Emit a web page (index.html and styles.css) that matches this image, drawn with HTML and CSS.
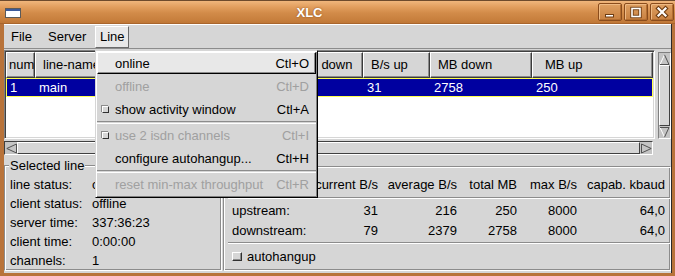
FILE: index.html
```html
<!DOCTYPE html>
<html lang="en">
<head>
<meta charset="utf-8">
<title>XLC</title>
<link rel="stylesheet" href="styles.css">
</head>
<body>
<div class="window">
  <header class="titlebar">
    <svg class="winicon" width="16" height="10" viewBox="0 0 16 10"><rect x="0.5" y="0.5" width="15" height="9" fill="#fff" stroke="#5a5a5a"/><rect x="1" y="1" width="14" height="2" fill="#3c5a9a"/></svg>
    <div class="title">XLC</div>
    <div class="tbuttons">
      <div class="tbtn"><svg width="22" height="16" viewBox="0 0 22 16"><rect x="6.5" y="10.5" width="8" height="2.5" fill="#fff" stroke="#6e3c12"/></svg></div>
      <div class="tbtn"><svg width="22" height="16" viewBox="0 0 22 16"><rect x="7" y="4.5" width="8" height="8" fill="none" stroke="#6e3c12" stroke-width="3.4"/><rect x="7" y="4.5" width="8" height="8" fill="none" stroke="#fff" stroke-width="1.6"/></svg></div>
      <div class="tbtn"><svg width="22" height="16" viewBox="0 0 22 16"><path d="M7.5 4.5 L14.5 11.5 M14.5 4.5 L7.5 11.5" stroke="#6e3c12" stroke-width="4.4" stroke-linecap="square"/><path d="M7.5 4.5 L14.5 11.5 M14.5 4.5 L7.5 11.5" stroke="#fff" stroke-width="2.2" stroke-linecap="square"/></svg></div>
    </div>
  </header>

  <div class="client">
    <nav class="menubar">
      <span class="mitem w-file">File</span>
      <span class="mitem w-server">Server</span>
      <span class="mitem w-line open">Line</span>
    </nav>

    <div class="tablezone">
      <div class="tframe">
        <div class="thead">
          <div class="th c1">number</div>
          <div class="th c2">line-name</div>
          <div class="th c3"></div>
          <div class="th c4"></div>
          <div class="th c5">B/s down</div>
          <div class="th c6">B/s up</div>
          <div class="th c7">MB down</div>
          <div class="th c8 pad-wide">MB up</div>
        </div>
        <div class="trow sel">
          <div class="td c1 first">1</div>
          <div class="td c2">main</div>
          <div class="td c3"></div>
          <div class="td c4"></div>
          <div class="td c5"></div>
          <div class="td c6">31</div>
          <div class="td c7">2758</div>
          <div class="td c8">250</div>
        </div>
      </div>

      <div class="vscroll">
        <div class="sbtn v"><svg width="11" height="11" viewBox="0 0 11 11"><path d="M1 10.5 L5.5 0.8" stroke="#fff" fill="none"/><path d="M5.5 0.8 L10 10.5 L1 10.5" stroke="#505050" fill="none"/></svg></div>
        <div class="vthumb"></div>
        <div class="sbtn v"><svg width="11" height="11" viewBox="0 0 11 11"><path d="M1 0.5 L5.5 10.2" stroke="#fff" fill="none"/><path d="M5.5 10.2 L10 0.5 L1 0.5" stroke="#505050" fill="none"/></svg></div>
      </div>

      <div class="hscroll">
        <div class="sbtn h"><svg width="11" height="11" viewBox="0 0 11 11"><path d="M10.5 1 L0.8 5.5" stroke="#505050" fill="none"/><path d="M0.8 5.5 L10.5 10 L10.5 1" stroke="#505050" fill="none"/></svg></div>
        <div class="hthumb"></div>
        <div class="sbtn h"><svg width="11" height="11" viewBox="0 0 11 11"><path d="M0.5 1 L10.2 5.5" stroke="#505050" fill="none"/><path d="M10.2 5.5 L0.5 10 L0.5 1" stroke="#505050" fill="none"/></svg></div>
      </div>
    </div>

    <div class="bottom">
      <fieldset class="group">
        <legend>Selected line</legend>
        <div class="ginfo">
          <span>line status:</span><span>connected</span>
          <span>client status:</span><span>offline</span>
          <span>server time:</span><span>337:36:23</span>
          <span>client time:</span><span>0:00:00</span>
          <span>channels:</span><span>1</span>
        </div>
      </fieldset>

      <section class="stats">
        <div class="sgrid shead">
          <span></span>
          <span class="r">current B/s</span>
          <span class="r">average B/s</span>
          <span class="r">total MB</span>
          <span class="r">max B/s</span>
          <span class="r">capab. kbaud</span>
        </div>
        <div class="hsep"></div>
        <div class="sgrid srow">
          <span>upstream:</span>
          <span class="r">31</span>
          <span class="r">216</span>
          <span class="r">250</span>
          <span class="r">8000</span>
          <span class="r">64,0</span>
        </div>
        <div class="sgrid srow">
          <span>downstream:</span>
          <span class="r">79</span>
          <span class="r">2379</span>
          <span class="r">2758</span>
          <span class="r">8000</span>
          <span class="r">64,0</span>
        </div>
        <div class="hsep sep2"></div>
        <label class="autoh"><span class="cbox"></span>autohangup</label>
      </section>
    </div>
  </div>

  <div class="menu">
    <div class="mi hl"><span class="ind"></span><span class="lbl">online</span><span class="sc">Ctl+O</span></div>
    <div class="mi dis"><span class="ind"></span><span class="lbl">offline</span><span class="sc">Ctl+D</span></div>
    <div class="mi"><span class="ind on"></span><span class="lbl">show activity window</span><span class="sc">Ctl+A</span></div>
    <div class="msep"></div>
    <div class="mi dis"><span class="ind on"></span><span class="lbl">use 2 isdn channels</span><span class="sc">Ctl+I</span></div>
    <div class="mi"><span class="ind"></span><span class="lbl">configure autohangup...</span><span class="sc">Ctl+H</span></div>
    <div class="msep"></div>
    <div class="mi dis"><span class="ind"></span><span class="lbl">reset min-max throughput</span><span class="sc">Ctl+R</span></div>
  </div>
</div>
</body>
</html>
```

FILE: styles.css
```css
* { box-sizing: border-box; }
html, body { margin: 0; padding: 0; }
body {
  width: 675px; height: 276px; overflow: hidden;
  background: #b8733a;
  font-family: "Liberation Sans", Arial, sans-serif;
  font-size: 13px; color: #000;
}
.window { position: relative; width: 675px; height: 276px; display: flex; flex-direction: column; }

/* title bar */
.titlebar {
  flex: none; height: 24px; display: flex; align-items: flex-start; padding-left: 5px;
  background: linear-gradient(to bottom, #6e4a2c 0, #6e4a2c 1px, #f0b67c 1px, #e29e5e 7px, #d28b49 13px, #c77f3d 20px, #bf7736 23px, #a9652c 23px);
}
.winicon { margin-top: 8px; flex: none; }
.title {
  flex: 1; text-align: center; color: #fff; font-weight: bold; font-size: 13px; line-height: 25px;
  text-shadow: 0 0 2px #8a4e1c;
}
.tbuttons { display: flex; gap: 2px; margin: 3px 1px 0 0; }
.tbtn {
  width: 24px; height: 18px; border: 1px solid #8a4c1c; border-radius: 2px;
  background: linear-gradient(#dfa062, #c88040);
  box-shadow: inset 1px 1px 0 #efba84, inset -1px -1px 0 #b46e30;
}
.tbtn svg { display: block; }

/* client */
.client {
  flex: 1; min-height: 0; margin: 0 3px 3px 4px;
  background: #d6d6d6; border-right: 1px solid #2a2a2a;
  display: flex; flex-direction: column;
}

/* menubar */
.menubar {
  flex: none; height: 25px; display: flex; gap: 6px; padding: 1px 0 0 2px;
  border-top: 1px solid #fff; border-bottom: 1px solid #8c8c8c;
}
.mitem { height: 22px; line-height: 20px; padding-left: 4px; border: 1px solid transparent; white-space: nowrap; }
.w-file { width: 31px; }
.w-server { width: 46px; }
.w-line { width: 34px; }
.mitem.open { background: #e8e8e8; border-color: #fff #6a6a6a #6a6a6a #fff; }

/* table area */
.tablezone {
  flex: none; margin-top: 1px;
  display: grid; grid-template-columns: 651px 3px 13px; grid-template-rows: 89px 14px; row-gap: 2px;
}
.tframe {
  grid-column: 1; grid-row: 1; background: #fff; overflow: hidden; padding: 1px;
  border: 1px solid; border-color: #808080 #fff #fff #808080;
  box-shadow: inset 1px 1px 0 #404040, inset -1px -1px 0 #d6d6d6;
}
.thead { display: flex; height: 26px; }
.th {
  flex: none; height: 26px; line-height: 24px; padding-left: 7px; white-space: nowrap; overflow: hidden;
  background: #d6d6d6; border: 1px solid; border-color: #fff #3a3a3a #3a3a3a #fff;
  box-shadow: inset -1px -1px 0 #8c8c8c;
}
.th.c1 { padding-left: 2px; }
.th.c5 { padding-left: 5px; }
.th.pad-wide { padding-left: 12px; }
.c1 { width: 29px; }
.c2 { width: 120px; }
.c3 { width: 70px; }
.c4 { width: 68px; }
.c5 { width: 70px; }
.c6 { width: 67px; }
.c7 { width: 102px; }
.c8 { width: 121px; }
.trow { display: flex; height: 19px; }
.trow.sel { background: #0000a0; color: #fff; border: 1px solid #ffff50; }
.td { flex: none; line-height: 17px; padding-left: 4px; white-space: nowrap; }
.td.first { width: 28px; padding-left: 3px; }

/* scrollbars */
.vscroll {
  grid-column: 3; grid-row: 1; margin-top: 2px;
  display: flex; flex-direction: column;
  border: 1px solid; border-color: #808080 #fff #fff #808080; background: #c4c4c4;
}
.sbtn { flex: none; display: flex; align-items: center; justify-content: center; }
.sbtn.v { height: 12px; }
.sbtn.h { width: 12px; }
.sbtn svg { display: block; }
.vthumb {
  flex: 1; background: #d6d6d6;
  border: 1px solid; border-color: #fff #404040 #404040 #fff;
}
.hscroll {
  grid-column: 1; grid-row: 2; margin-right: 2px;
  display: flex;
  border: 1px solid; border-color: #404040 #fff #fff #404040; background: #c4c4c4;
}
.hthumb {
  flex: 1; background: #d6d6d6;
  border: 1px solid; border-color: #fff #404040 #404040 #fff;
}

/* bottom */
.bottom { flex: 1; min-height: 0; display: flex; }
.group {
  margin: 3px 0 2px 0; padding: 0 0 0 4px; width: 218px; min-width: 0;
  border: 1px solid; border-color: #8c8c8c #fff #fff #8c8c8c;
  box-shadow: inset 1px 1px 0 #fff, inset -1px -1px 0 #8c8c8c;
}
.group legend { padding: 0 1px; line-height: 15px; background: #d6d6d6; }
.ginfo {
  display: grid; grid-template-columns: 82px auto; grid-auto-rows: 19px; align-items: center;
  margin: 2px 0 0 1px; white-space: nowrap;
}

.stats {
  flex: 1; margin: 11px 0 2px 1px; padding: 0 4px 0 8px;
  border: 1px solid; border-color: #8c8c8c #fff #fff #8c8c8c;
  box-shadow: inset 1px 1px 0 #fff, inset -1px -1px 0 #8c8c8c;
  display: flex; flex-direction: column;
}
.sgrid {
  display: grid; grid-template-columns: 82px 64px 79px 60px 60px 88px; align-items: center;
  white-space: nowrap;
}
.sgrid .r { text-align: right; }
.shead { margin-top: 9px; height: 16px; }
.srow { height: 20px; }
.hsep {
  flex: none; height: 2px; margin: 5px -4px 1px -4px;
  border-top: 1px solid #8c8c8c; border-bottom: 1px solid #fff;
}
.hsep.sep2 { margin-top: 2px; margin-bottom: 0; }
.autoh { height: 25px; display: flex; align-items: center; }
.cbox {
  width: 10px; height: 9px; margin-right: 5px; background: #d6d6d6;
  border: 1px solid; border-color: #fff #303030 #303030 #fff;
  box-shadow: inset -1px -1px 0 #8c8c8c;
}

/* drop-down menu */
.menu {
  position: absolute; left: 95px; top: 50px; width: 223px; height: 148px; padding: 1px;
  background: #d6d6d6;
  border: 1px solid; border-color: #d6d6d6 #000 #000 #d6d6d6;
  box-shadow: inset 1px 1px 0 #fff, inset -1px -1px 0 #808080;
}
.mi { height: 23px; display: flex; align-items: center; padding-right: 7px; white-space: nowrap; }
.mi .lbl { flex: 1; }
.mi.hl {
  height: 22px; margin-bottom: 1px; padding-right: 6px;
  background: #e8e8e8; border: 1px solid; border-color: #fff #000 #000 #fff;
  box-shadow: inset -1px -1px 0 #8c8c8c;
}
.mi.dis { color: #a0a0a0; }
.ind { flex: none; width: 7px; height: 7px; margin: 0 6px 0 5px; }
.mi.hl .ind { margin-left: 4px; }
.ind.on {
  background: #d6d6d6; border: 1px solid; border-color: #fff #303030 #303030 #fff;
  box-shadow: -1px -1px 0 #8c8c8c;
}
.msep { height: 3px; border-top: 1px solid #8c8c8c; border-bottom: 1px solid #fff; }
```
